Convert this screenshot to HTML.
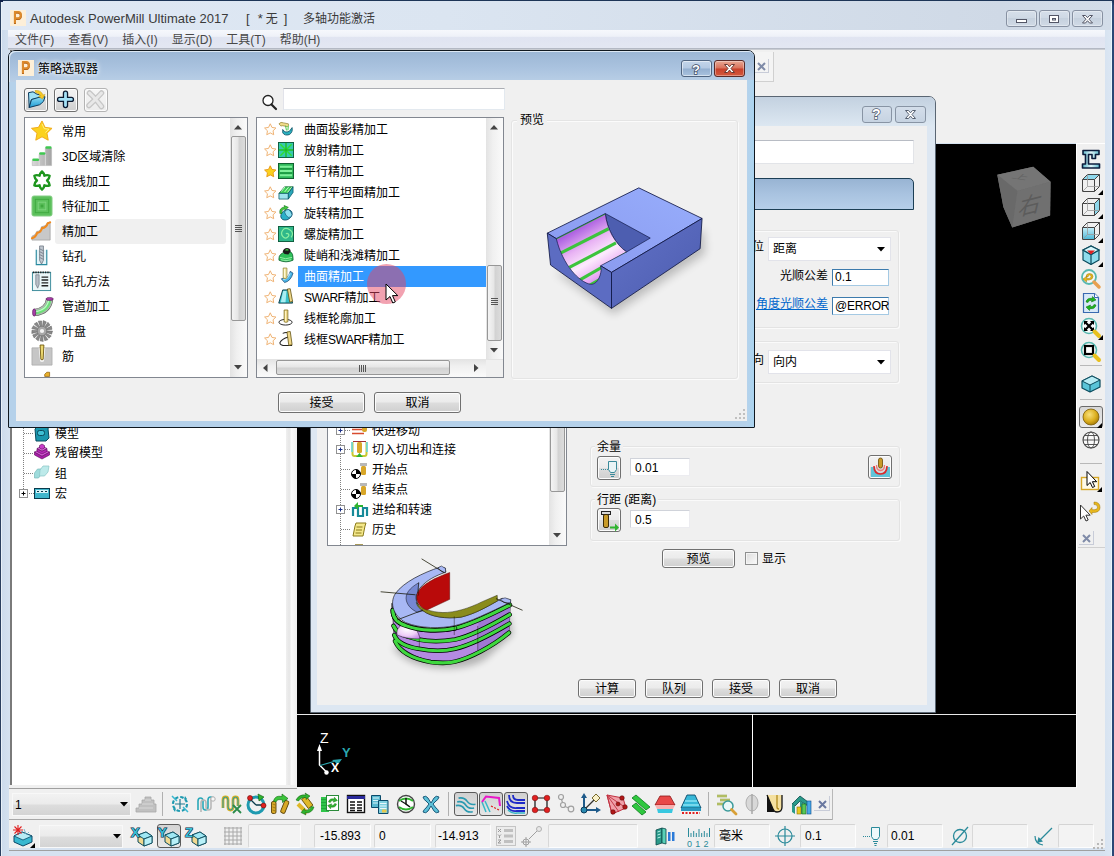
<!DOCTYPE html>
<html lang="zh-CN">
<head>
<meta charset="utf-8">
<title>Autodesk PowerMill Ultimate 2017</title>
<style>
html,body{margin:0;padding:0;}
body{width:1114px;height:856px;overflow:hidden;position:relative;background:#cfdcec;
 font-family:"Liberation Sans","Noto Sans CJK SC",sans-serif;font-size:12px;color:#000;}
.a{position:absolute;box-sizing:border-box;}
.t{position:absolute;white-space:nowrap;line-height:16px;margin-top:1px;}
svg{position:absolute;overflow:visible;}
/* main window */
#frame{left:0;top:0;width:1114px;height:856px;background:linear-gradient(90deg,#cbdaec,#d6e2f0 1%,#d6e2f0 99%,#dde8f4);}
#titlebar{left:2px;top:1px;width:1110px;height:29px;background:linear-gradient(90deg,#dfe8f4,#dbe5f1 40%,#cfd9e6 90%,#d3dde9);}
#menubar{left:8px;top:30px;width:1097px;height:18px;background:linear-gradient(#f6f8fc 0,#eef1f8 35%,#e0e4f1 42%,#e3e7f2 100%);}
.wbtn{border:1px solid #8791a2;border-radius:3px;background:linear-gradient(#d6dfea,#ced8e4 50%,#c6d1de 50%,#d0dae6);box-shadow:inset 0 0 0 1px rgba(255,255,255,.35);}
#explorer{left:10px;top:50px;width:280px;height:736px;background:#fff;}
#gfx{left:297px;top:144px;width:779px;height:644px;background:#000;}
#topgray{left:290px;top:50px;width:815px;height:93px;background:#f0f0f0;}
#rtool{left:1076px;top:143px;width:29px;height:645px;background:#f0f0f0;}
#btool{left:9px;top:788px;width:1096px;height:60px;background:#f0f0f0;}
/* dialogs */
.dlgframe{background:#b9d1ea;border:1px solid #4a5868;border-radius:7px 7px 2px 2px;}
.dlgbody{background:#f0f0f0;}
.btn{padding-top:1px;border:1px solid #707070;border-radius:3px;background:linear-gradient(#f2f2f2,#ebebeb 48%,#dddddd 52%,#cfcfcf);text-align:center;line-height:18px;box-shadow:inset 0 0 0 1px #fcfcfc;}
.inp{background:#fff;border:1px solid #abadb3;}
.grp{border:1px solid #e3e3e3;border-radius:3px;box-shadow:inset 1px 1px 0 #fafafa,1px 1px 0 #fafafa;}
.list{background:#fff;border:1px solid #828790;}
.li{position:absolute;white-space:nowrap;font-size:12px;line-height:16px;margin-top:1px;}
.sbv{background:linear-gradient(90deg,#e3e3e3,#f0f0f0 40%,#fafafa);}
.thumbv{border:1px solid #979797;border-radius:2px;background:linear-gradient(90deg,#f4f4f4,#e6e6e6 45%,#d2d2d2 55%,#dcdcdc);}
.thumbh{border:1px solid #979797;border-radius:2px;background:linear-gradient(#f4f4f4,#e6e6e6 45%,#d2d2d2 55%,#dcdcdc);}
</style>
</head>
<body>
<div class="a" id="frame"></div>
<div class="a" id="titlebar"></div>
<div class="a" id="menubar"></div>
<!-- TITLE -->
<div class="t" style="left:30px;top:10px;font-size:13px;color:#3a3a3a;letter-spacing:.02px;">Autodesk PowerMill Ultimate 2017</div>
<div class="t" style="left:246px;top:10px;font-size:13px;color:#3a3a3a;">[<span style="margin-left:8px">*</span><span style="margin-left:3px;font-size:12px">无</span><span style="margin-left:6px">]</span></div>
<div class="t" style="left:303px;top:10px;font-size:12px;color:#3a3a3a;">多轴功能激活</div>
<!-- MENU -->
<div class="t" id="menu" style="left:15px;top:31px;color:#484848;"><span>文件(F)</span><span style="margin-left:14px">查看(V)</span><span style="margin-left:14px">插入(I)</span><span style="margin-left:14px">显示(D)</span><span style="margin-left:14px">工具(T)</span><span style="margin-left:14px">帮助(H)</span></div>
<!-- MAIN PANELS -->
<div class="a" id="topgray"></div>
<div class="a" id="explorer"></div>
<div class="a" id="gfx"></div>
<div class="a" id="rtool"></div>
<div class="a" id="btool"></div>

<!-- window edge lines -->
<div class="a" style="left:0;top:0;width:1114px;height:1px;background:#1d3557;"></div>
<div class="a" style="left:0;top:0;width:1px;height:856px;background:#2a3f5f;"></div>
<div class="a" style="left:1px;top:1px;width:1px;height:855px;background:#e8f0f8;"></div>
<div class="a" style="left:1112px;top:0;width:2px;height:856px;background:#2b4876;"></div>
<div class="a" style="left:1111px;top:3px;width:1px;height:853px;background:#e9f6fc;"></div>
<div class="a" style="left:1108px;top:0;width:6px;height:5px;background:radial-gradient(circle at 0 100%,transparent 5px,#1c3358 6px);"></div>
<div class="a" style="left:0;top:0;width:3px;height:2px;background:#0f1f4a;"></div>
<!-- app icon -->
<div class="a" style="left:10px;top:10px;width:16px;height:16px;background:#fdefd8;"></div>
<div class="t" style="left:13px;top:8px;font-size:16px;font-weight:bold;color:#dd8a2c;line-height:18px;transform:scaleX(.88);transform-origin:0 0;text-shadow:0 1px 0 #b8681a;">P</div>
<!-- window buttons -->
<div class="a wbtn" style="left:1006px;top:10px;width:31px;height:17px;"></div>
<div class="a wbtn" style="left:1039px;top:10px;width:31px;height:17px;"></div>
<div class="a wbtn" style="left:1072px;top:10px;width:31px;height:17px;"></div>
<svg style="left:1006px;top:10px" width="97" height="17" viewBox="0 0 97 17">
 <rect x="10.5" y="9.5" width="10" height="3" fill="#fff" stroke="#535666" stroke-width="1"/>
 <rect x="43.500" y="5.500" width="9" height="7" fill="#fff" stroke="#535666" stroke-width="1"/>
 <rect x="46.500" y="8.500" width="3" height="1.500" fill="#dfe6f0" stroke="#535666" stroke-width="1"/>
 <path d="M76.500 5.500h3l2 2.200 2-2.200h3l-3.500 3.700 3.500 3.800h-3l-2-2.300-2 2.300h-3l3.500-3.800z" fill="#fff" stroke="#535666" stroke-width="1"/>
</svg>
<!-- menubar lines -->
<div class="a" style="left:8px;top:48px;width:1097px;height:1px;background:#b4b9c4;"></div><div class="a" style="left:8px;top:49px;width:1097px;height:1px;background:#c9ccd2;"></div>
<!-- small x toolbar top -->
<div class="a" style="left:754px;top:52px;width:20px;height:30px;border-right:1px solid #d0d0d0;border-bottom:1px solid #d0d0d0;background:#f4f4f4;"></div>
<div class="a" style="left:755px;top:59px;width:14px;height:14px;border-right:1px solid #c8ccd8;border-bottom:1px solid #c8ccd8;"></div>
<svg style="left:757px;top:62px" width="9" height="9" viewBox="0 0 9 9"><path d="M1 1l7 7M8 1l-7 7" stroke="#7f8ba8" stroke-width="2" fill="none"/></svg>
<!-- explorer borders -->
<div class="a" style="left:10px;top:50px;width:2px;height:735px;background:#7a7a7a;"></div>
<div class="a" style="left:286px;top:50px;width:11px;height:738px;background:linear-gradient(90deg,#f0f0f0,#e6e6e6 30%,#fafafa 50%,#f0f0f0);"></div>
<div class="a" style="left:9px;top:785px;width:288px;height:3px;background:#f0f0f0;"></div>
<div class="a" style="left:9px;top:788px;width:288px;height:1px;background:#a0a0a0;"></div>
<div class="a" style="left:9px;top:819px;width:824px;height:1px;background:#a8a8a8;"></div>
<div class="a" style="left:9px;top:850px;width:1096px;height:1px;background:#a0a0a0;"></div>
<!-- explorer tree -->
<svg style="left:10px;top:420px" width="60" height="90" viewBox="0 0 60 90">
 <path d="M13.500 0v70M14 13.500h10M14 33.500h10M14 53.500h10M19 73.500h5" stroke="#808080" stroke-width="1" stroke-dasharray="1 1" fill="none"/>
 <rect x="9.500" y="69.500" width="8" height="8" fill="#fff" stroke="#919191"/>
 <path d="M11.500 73.500h4M13.500 71.500v4" stroke="#000" stroke-width="1"/>
 <!-- model icon -->
 <path d="M25 9l4-4h10l-1 4 1 9-3 3H26z" fill="#1a96ad" stroke="#0a4a5c" stroke-width="1"/>
 <rect x="27.500" y="10.500" width="7" height="5" rx="2" fill="#3fc0d4" stroke="#0a4a5c"/>
 <!-- residual model -->
 <path d="M24.500 35l7.500 4 7.500-4v-3l-7.500 4-7.500-4z" fill="#a81ea8" stroke="#5a0a5a" stroke-width=".6"/>
 <path d="M24.500 32l7.500-3.500 7.500 3.500-7.500 4z" fill="#e060e0" stroke="#5a0a5a" stroke-width=".6"/>
 <path d="M27 31.500l5 2.500 5-2.500v-3l-5 2.500-5-2.500z" fill="#b428b4" stroke="#5a0a5a" stroke-width=".6"/>
 <path d="M27 28.500l5-2.500 5 2.500-5 2.500z" fill="#e878e8" stroke="#5a0a5a" stroke-width=".6"/>
 <path d="M29.500 28l2.500 1.300 2.500-1.300v-2.500L32 24l-2.500 1.500z" fill="#c83cc8" stroke="#5a0a5a" stroke-width=".6"/>
 <!-- group -->
 <path d="M24.500 53l3-4h5l-1 5-3 4h-4z" fill="#9fdcdc" stroke="#7ababa" stroke-width=".7"/>
 <path d="M30 50l3-4h6l-1 6-3.500 4h-5z" fill="#bdeaea" stroke="#86c4c4" stroke-width=".7"/>
 <!-- macro -->
 <rect x="24.500" y="68.500" width="15" height="10" fill="#3fb6cc" stroke="#0a3a4c"/>
 <rect x="26" y="70" width="12" height="3" fill="#d6f3f8"/>
 <path d="M27 71.500h2M31 71.500h2M35 71.500h2" stroke="#0a3a4c"/>
</svg>
<div class="t" style="left:55px;top:425px;">模型</div>
<div class="t" style="left:55px;top:444px;">残留模型</div>
<div class="t" style="left:55px;top:465px;">组</div>
<div class="t" style="left:55px;top:485px;">宏</div>
<!-- graphics area extras -->
<div class="a" style="left:297px;top:714px;width:779px;height:1px;background:#e8e8e8;"></div>
<div class="a" style="left:752px;top:714px;width:1px;height:74px;background:#fff;"></div>
<div class="a" style="left:297px;top:787px;width:780px;height:1px;background:#f0f0f0;"></div>
<!-- view cube -->
<svg style="left:980px;top:150px" width="90" height="80" viewBox="0 0 963 856">
 <defs><filter id="vb" x="-10%" y="-10%" width="120%" height="120%"><feGaussianBlur stdDeviation="6"/></filter></defs>
 <g filter="url(#vb)">
 <path d="M185 265L570 180L755 340L750 700L345 830L250 610Z" fill="#6e6e6e"/>
 <path d="M185 265L570 180L755 340L400 440Z" fill="#747474"/>
 <path d="M185 265L400 440L345 830L250 610Z" fill="#696969"/>
 <path d="M400 440L755 340L750 700L345 830Z" fill="#6f6f6f"/>
 </g>
</svg>
<div class="t" style="left:1019px;top:193px;font-size:22px;line-height:24px;color:#5c5c5c;transform:skewY(-14deg) skewX(-14deg);">右</div>
<div class="t" style="left:1013px;top:168px;font-size:15px;line-height:16px;color:#646464;transform:rotate(8deg) skewX(-40deg) scaleY(.45);">上</div>
<!-- axes -->
<svg style="left:310px;top:725px" width="50" height="55" viewBox="0 0 50 55">
 <path d="M9.500 22v18l6.500 6.500" stroke="#fff" stroke-width="1.500" fill="none"/>
 <path d="M9.500 19l-2.500 7h5z" fill="#fff"/>
 <circle cx="16.500" cy="47.500" r="2.200" fill="#fff"/>
 <path d="M10 40.500l14-4" stroke="#2aa7b0" stroke-width="1.200"/>
 <path d="M32 34l-10 1 6 4.500z" fill="#2aa7b0"/>
</svg>
<div class="t" style="left:320px;top:729px;font-size:14px;color:#fff;">Z</div>
<div class="t" style="left:342px;top:744px;font-size:13px;color:#2aa7b0;font-weight:bold;">Y</div>
<div class="t" style="left:331px;top:759px;font-size:12px;color:#fff;font-weight:bold;">X</div>

<div class="a" style="left:1076px;top:143px;width:1px;height:645px;background:#fff;"></div>
<div class="a" style="left:1077px;top:143px;width:28px;height:1px;background:#fff;"></div>
<svg style="left:1079px;top:147px" width="24" height="24" viewBox="0 0 24 24"><defs><linearGradient id="mt" x1="0" y1="0" x2="1" y2="0"><stop offset="0" stop-color="#5ab8cc"/><stop offset=".5" stop-color="#e0f4f8"/><stop offset="1" stop-color="#5ab8cc"/></linearGradient></defs><path d="M4 3.500h16v4h-3.500v4H13v-4H9.500v9.500H20.500v4H3.500v-4H6.500V7.500H4z" fill="url(#mt)" stroke="#0c1c3c" stroke-width="1.600" stroke-linejoin="round"/></svg>
<svg style="left:1079px;top:171px" width="24" height="24" viewBox="0 0 24 24"><path d="M3.500 8.500l5-5h12l-5 5z" fill="#8fd8ec"/><path d="M3.500 8.500l5-5h12v12l-5 5h-12z M3.500 8.500h12v12 M15.500 8.500l5-5" fill="none" stroke="#444" stroke-width="1"/><path d="M3.500 20.500l5-5h12M8.500 3.500v12" fill="none" stroke="#9a9a9a" stroke-width=".8"/><path d="M24 19v5h-5z" fill="#000"/></svg>
<svg style="left:1079px;top:195px" width="24" height="24" viewBox="0 0 24 24"><path d="M15.500 8.500l5-5v12l-5 5z" fill="#8fd8ec"/><path d="M3.500 8.500l5-5h12v12l-5 5h-12z M3.500 8.500h12v12 M15.500 8.500l5-5" fill="none" stroke="#444" stroke-width="1"/><path d="M3.500 20.500l5-5h12M8.500 3.500v12" fill="none" stroke="#9a9a9a" stroke-width=".8"/><path d="M24 19v5h-5z" fill="#000"/></svg>
<svg style="left:1079px;top:219px" width="24" height="24" viewBox="0 0 24 24"><defs><linearGradient id="cf" x1="0" y1="0" x2="0" y2="1"><stop offset="0" stop-color="#c8eef8"/><stop offset="1" stop-color="#4ab8d8"/></linearGradient></defs><path d="M3.500 8.500h12v12h-12z" fill="url(#cf)"/><path d="M3.500 8.500l5-5h12v12l-5 5h-12z M3.500 8.500h12v12 M15.500 8.500l5-5" fill="none" stroke="#444" stroke-width="1"/><path d="M3.500 20.500l5-5h12M8.500 3.500v12" fill="none" stroke="#9a9a9a" stroke-width=".8"/><path d="M24 19v5h-5z" fill="#000"/></svg>
<svg style="left:1079px;top:243px" width="24" height="24" viewBox="0 0 24 24"><path d="M4 7l8-4 8 4v10l-8 4.500-8-4.500z" fill="#8fdcec" stroke="#0a4a5c" stroke-width="1.200" stroke-linejoin="round"/><path d="M4 7l8 4.500 8-4.500M12 11.500v10" stroke="#0a4a5c" stroke-width="1.200" fill="none"/><path d="M4 7l8-4 8 4-8 4.500z" fill="#d8f6fa" stroke="#0a4a5c" stroke-width="1.200"/><path d="M8 7.500l4 4 4-4z" fill="#e02020"/><path d="M24 19v5h-5z" fill="#000"/></svg>
<svg style="left:1079px;top:267px" width="24" height="24" viewBox="0 0 24 24"><circle cx="10" cy="10" r="7" fill="#f4f8f8" stroke="#58b8b0" stroke-width="1.800"/><path d="M7 10q0-3.500 3.500-3.500T14 9.500 10 13H7.500v2L4 12l3.500-2.500v2H10q2-.2 2-2T10.500 8 9 10z" fill="#e8b81e" stroke="#a07808" stroke-width=".5"/><path d="M15 15l5 5" stroke="#e8a050" stroke-width="3.500" stroke-linecap="round"/></svg>
<svg style="left:1079px;top:291px" width="24" height="24" viewBox="0 0 24 24"><path d="M4.500 2.500h11l4 4v15h-15z" fill="#d8e8f8" stroke="#3a6ab0" stroke-width="1.200"/><path d="M15.500 2.500v4h4" fill="#fff" stroke="#3a6ab0"/><path d="M7 11q1-4.500 6-3.500l.5-2 3.500 3.500-4.500 2 .4-1.800Q9.500 9 9 11.500z" fill="#1eb41e" stroke="#0a6a0a" stroke-width=".5"/><path d="M17 14q-1 4.500-6 3.500l-.5 2L7 16l4.500-2-.4 1.800q3.400.2 3.900-2.300z" fill="#1eb41e" stroke="#0a6a0a" stroke-width=".5"/></svg>
<svg style="left:1079px;top:316px" width="24" height="24" viewBox="0 0 24 24"><circle cx="10" cy="10" r="7.500" fill="#f8fcfc" stroke="#58b8b0" stroke-width="1.600"/><path d="M5 5h4l-1.200 1.200 2.200 2.300 2.200-2.300L11 5h4v4l-1.200-1.200-2.300 2.200 2.300 2.200L15 11v4h-4l1.200-1.200-2.200-2.300-2.200 2.300L9 15H5v-4l1.200 1.200 2.300-2.200-2.300-2.200L5 9z" fill="#000"/><path d="M15.500 15.500l4.500 4.500" stroke="#e8c01e" stroke-width="4" stroke-linecap="round"/><path d="M24 19v5h-5z" fill="#000"/></svg>
<svg style="left:1079px;top:340px" width="24" height="24" viewBox="0 0 24 24"><circle cx="10" cy="10" r="7.500" fill="#f8fcfc" stroke="#58b8b0" stroke-width="1.600"/><rect x="6" y="6" width="8" height="8" fill="#fff" stroke="#000" stroke-width="2.200"/><path d="M15.500 15.500l4.500 4.500" stroke="#e8c01e" stroke-width="4" stroke-linecap="round"/></svg>
<div class="a" style="left:1080px;top:365px;width:22px;height:1px;background:#b8b8b8;"></div>
<svg style="left:1079px;top:372px" width="24" height="24" viewBox="0 0 24 24"><path d="M3 9l10-5 8 4v7l-10 5-8-4z" fill="#5ac4d8" stroke="#0a4a5c" stroke-width="1.200" stroke-linejoin="round"/><path d="M3 9l8 4 10-5-8-4z" fill="#b8ecf4" stroke="#0a4a5c" stroke-width="1"/><path d="M11 13v7" stroke="#0a4a5c"/></svg>
<div class="a" style="left:1080px;top:399px;width:22px;height:1px;background:#b8b8b8;"></div>
<div class="a" style="left:1079px;top:406px;width:24px;height:22px;border:1px solid #6a6a6a;border-radius:3px;background:linear-gradient(#d8d8d8,#eaeaea);"></div>
<svg style="left:1079px;top:405px" width="24" height="24" viewBox="0 0 24 24"><defs><radialGradient id="sg" cx=".4" cy=".35" r=".7"><stop offset="0" stop-color="#f8e07a"/><stop offset=".6" stop-color="#dcae1e"/><stop offset="1" stop-color="#a07808"/></radialGradient></defs><circle cx="12" cy="12" r="8" fill="url(#sg)" stroke="#7a5a08" stroke-width=".8"/><path d="M23 18v5h-5z" fill="#000"/></svg>
<svg style="left:1079px;top:428px" width="24" height="24" viewBox="0 0 24 24"><circle cx="12" cy="12" r="8" fill="#fafafa" stroke="#444" stroke-width="1.100"/><ellipse cx="12" cy="12" rx="3.500" ry="8" fill="none" stroke="#444" stroke-width=".9"/><path d="M4 12h16M5.500 7.500h13M5.500 16.500h13" stroke="#444" stroke-width=".9"/></svg>
<div class="a" style="left:1080px;top:463px;width:22px;height:1px;background:#b8b8b8;"></div>
<svg style="left:1079px;top:470px" width="24" height="24" viewBox="0 0 24 24"><rect x="2.500" y="7.500" width="17" height="12" fill="#fffbe8" stroke="#d8a828" stroke-width="1.400"/><path d="M8 1.500v14l3.200-3 2.300 5 2.200-1-2.300-4.800h4.300z" fill="#fff" stroke="#000" stroke-width="1" stroke-linejoin="round"/><path d="M23 17v5h-5z" fill="#000"/></svg>
<svg style="left:1079px;top:500px" width="24" height="24" viewBox="0 0 24 24"><path d="M1.500 5v14l3.200-3 2.300 5 2.200-1-2.300-4.800h4.300z" fill="#fff" stroke="#333" stroke-width="1" stroke-linejoin="round"/><path d="M10 11l3-3.500v2.200q5.500.5 5.500-2.500T15 4.500V2q6 0 6 5.500T13 12.500v2z" fill="#e8b81e" stroke="#9a7208" stroke-width=".5"/></svg>
<div class="a" style="left:1079px;top:531px;width:15px;height:14px;border-right:1px solid #c8ccd8;border-bottom:1px solid #c8ccd8;"></div>
<svg style="left:1082px;top:534px" width="9" height="9" viewBox="0 0 9 9"><path d="M1 1l7 7M8 1l-7 7" stroke="#7f8ba8" stroke-width="2" fill="none"/></svg>
<div class="a" style="left:1078px;top:547px;width:27px;height:1px;background:#d0d0d0;"></div>
<div class="a" style="left:12px;top:793px;width:119px;height:23px;border:1px solid #f8f8f8;background:linear-gradient(#f2f2f2,#ebebeb 48%,#dddddd 52%,#d4d4d4);"></div>
<div class="t" style="left:15px;top:796px;">1</div>
<svg style="left:120px;top:802px" width="9" height="5"><path d="M0 0h8L4 4.500z" fill="#000"/></svg>
<svg style="left:134px;top:792px" width="24" height="24" viewBox="0 0 24 24"><path d="M2 20v-4h3v-4h3V8h3V5h6v3h3v4h2v8z" fill="#c0c0c0" stroke="#a8a8a8" stroke-width=".8"/><path d="M5 16h14M8 12h11M11 8h6" stroke="#d8d8d8"/></svg>
<div class="a" style="left:162px;top:792px;width:1px;height:24px;background:#b0b0b0;"></div>
<svg style="left:168px;top:792px" width="24" height="24" viewBox="0 0 24 24"><circle cx="12" cy="12" r="7" fill="none" stroke="#1e9ab0" stroke-width="2.200" stroke-dasharray="3.500 2"/><path d="M12 7v10M7 12h10" stroke="#1e7a90" stroke-width="1.200"/><path d="M15 15l5 5M9 9L4 4" stroke="#3ab8d0" stroke-width="1.500"/><path d="M17 4l2 3-3 .5zM7 20l-2-3 3-.5z" fill="#1e9ab0"/></svg>
<svg style="left:194px;top:792px" width="24" height="24" viewBox="0 0 24 24"><path d="M4 18V9q0-3 2.500-3T9 9v6q0 3 2.500 3t2.500-3V8q0-3 2.500-3T19 8" fill="none" stroke="#2aa8b8" stroke-width="1.600"/><path d="M7 20V11q0-3 2.500-3T12 11v4q0 3 2.500 3t2.500-3V8q0-3 2.500-3" fill="none" stroke="#b8b8b8" stroke-width="1.600"/><circle cx="19" cy="7" r="2.200" fill="#f8f8f8" stroke="#b0b0b0"/></svg>
<svg style="left:220px;top:792px" width="24" height="24" viewBox="0 0 24 24"><path d="M3 16V8q0-3 2.500-3T8 8v7q0 3 2.500 3t2.500-3V8q0-3 2.500-3T18 8v6" fill="none" stroke="#d8b01e" stroke-width="2.800"/><path d="M3 16V8q0-3 2.500-3T8 8v7q0 3 2.500 3t2.500-3V8q0-3 2.500-3T18 8v6" fill="none" stroke="#1e9ab0" stroke-width="1"/><path d="M13 13l8 8M21 13l-8 8" stroke="#2a8a4a" stroke-width="1.800"/></svg>
<svg style="left:244px;top:792px" width="24" height="24" viewBox="0 0 24 24"><circle cx="12" cy="13" r="8" fill="none" stroke="#1e9ab0" stroke-width="3"/><path d="M12 13L6 7M12 13h7" stroke="#0a3a4a" stroke-width="1.300"/><path d="M14 2l6 3-5 4z" fill="#2fb42f" stroke="#0a5a0a" stroke-width=".6"/><circle cx="6" cy="6" r="2.500" fill="#e02020" stroke="#6a0808" stroke-width=".6"/><circle cx="19.500" cy="13.500" r="2.500" fill="#e02020" stroke="#6a0808" stroke-width=".6"/></svg>
<svg style="left:268px;top:792px" width="24" height="24" viewBox="0 0 24 24"><rect x="3.500" y="9.500" width="4.500" height="12" rx="1.500" fill="#d8a828" stroke="#5a4208" stroke-width=".9"/><path d="M4.500 12l3 1M4.500 15l3 1M4.500 18l3 1" stroke="#8a6a10" stroke-width=".7"/><rect x="14.500" y="8.500" width="4.500" height="13" rx="1.500" fill="#d8a828" stroke="#5a4208" stroke-width=".9" transform="rotate(22 17 15)"/><path d="M5.500 9Q7 3 14 4.500V2l6 4.500-5.500 4V8Q9 6.500 8 10z" fill="#3cc43c" stroke="#0a6a0a" stroke-width=".6"/></svg>
<svg style="left:293px;top:792px" width="24" height="24" viewBox="0 0 24 24"><path d="M8 8l4-4 8 8-4 4z" fill="#e0b828" stroke="#6a5208" stroke-width=".9" transform="rotate(8 12 12)"/><path d="M5 12l9 9" stroke="#e0b828" stroke-width="4"/><path d="M3 8q3-6 10-5l-1-2 5 3-4 3.500v-2Q8 5 5.500 9z" fill="#2fb42f" stroke="#0a5a0a" stroke-width=".5"/><path d="M21 15q-2 6.500-9 6l1 2-5-2.500 3.500-4 .3 2q5 0 6.500-4z" fill="#2fb42f" stroke="#0a5a0a" stroke-width=".5"/></svg>
<svg style="left:318px;top:792px" width="24" height="24" viewBox="0 0 24 24"><path d="M3 5h8v15H3z" fill="#2fc44a"/><path d="M3 7.500h8M3 10.500h8M3 13.500h8M3 16.500h8" stroke="#1ea838" stroke-width="1"/><rect x="8.500" y="3.500" width="12" height="15" fill="#fff" stroke="#2a8a3a" stroke-width="1"/><path d="M10.500 10q1-4 5.500-3l.4-1.800 3 3.300-4 1.700.3-1.600q-2.800-.3-3.400 1.900z" fill="#2fb42f" stroke="#0a6a0a" stroke-width=".4"/><path d="M18.500 12q-1 4-5.500 3l-.4 1.800-3-3.300 4-1.700-.3 1.600q2.800.3 3.400-1.900z" fill="#2fb42f" stroke="#0a6a0a" stroke-width=".4"/></svg>
<svg style="left:344px;top:792px" width="24" height="24" viewBox="0 0 24 24"><rect x="3.500" y="3.500" width="17" height="17" fill="#fff" stroke="#111" stroke-width="1.400"/><path d="M3 5.500h18" stroke="#2a2a9a" stroke-width="3"/><path d="M6 10h5M13 10h5M6 13h5M13 13h5M6 16h5M13 16h5M6 18.500h5M13 18.500h5" stroke="#111" stroke-width="1.300"/></svg>
<svg style="left:368px;top:792px" width="24" height="24" viewBox="0 0 24 24"><path d="M3.500 3.500h9v12h-9z" fill="#58b8d0" stroke="#0a4a6a" stroke-width="1"/><path d="M5 6h6M5 8.500h6M5 11h6" stroke="#d8f4fa"/><path d="M10.500 8.500h9.500v13h-9.500z" fill="#7fd0e0" stroke="#0a4a6a" stroke-width="1"/><path d="M12 11.500h6.500M12 14h6.500M12 16.500h6.500" stroke="#e8f8fc"/><rect x="14" y="17.500" width="4.500" height="3" fill="#e8c84a"/></svg>
<svg style="left:394px;top:792px" width="24" height="24" viewBox="0 0 24 24"><circle cx="12" cy="12" r="8.500" fill="#fff" stroke="#444" stroke-width="1.400"/><path d="M5 9q7-5 14 0M5 15q7 5 14 0" fill="none" stroke="#2fb42f" stroke-width="1.800"/><path d="M12 6v6l4 3" stroke="#111" stroke-width="1.500" fill="none"/><path d="M12 12L7 9" stroke="#111" stroke-width="1.200"/></svg>
<svg style="left:419px;top:792px" width="24" height="24" viewBox="0 0 24 24"><path d="M4 5q3-2 5 1l3 5 3-5q2-3 5-1-1 3-3 4l-3 3 3 4q2 1 3 4-3 2-5-1l-3-5-3 5q-2 3-5 1 1-3 3-4l3-4-3-3Q5 8 4 5z" fill="#5cc0d8" stroke="#1a5a7a" stroke-width="1" stroke-linejoin="round"/></svg>
<div class="a" style="left:448px;top:792px;width:1px;height:24px;background:#b0b0b0;"></div>
<div class="a" style="left:454px;top:792px;width:24px;height:24px;border:1px solid #5a5a5a;border-radius:3px;background:linear-gradient(#d0d0d0,#e6e6e6);"></div>
<div class="a" style="left:479px;top:792px;width:24px;height:24px;border:1px solid #5a5a5a;border-radius:3px;background:linear-gradient(#d0d0d0,#e6e6e6);"></div>
<div class="a" style="left:504px;top:792px;width:24px;height:24px;border:1px solid #5a5a5a;border-radius:3px;background:linear-gradient(#d0d0d0,#e6e6e6);"></div>
<svg style="left:454px;top:792px" width="24" height="24" viewBox="0 0 24 24"><path d="M3 9q5-3 9 0t9 0M3 13q5-3 9 0t9 0M3 17q5-3 9 0t9 0" fill="none" stroke="#2a9ab0" stroke-width="1.600" transform="rotate(20 12 12)"/></svg>
<svg style="left:479px;top:792px" width="24" height="24" viewBox="0 0 24 24"><path d="M3 10l4 10M6 9l5 11" stroke="#38b8c8" stroke-width="1.500"/><path d="M3 10L7 4.500 20 6l1 8" fill="none" stroke="#e818c8" stroke-width="2"/><path d="M12 14l8 4" stroke="#e02020" stroke-width="1.200" stroke-dasharray="2 1.500"/></svg>
<svg style="left:504px;top:792px" width="24" height="24" viewBox="0 0 24 24"><path d="M5 3q0 8 8 8h8M9 3q0 5 5 5h7M3 9q2 8 10 7h8M3 14q3 6 10 5h8" fill="none" stroke="#1e2ac8" stroke-width="1.800"/><path d="M4 18q4 4 9 3h8" fill="none" stroke="#38b8c8" stroke-width="1.500"/></svg>
<svg style="left:529px;top:792px" width="24" height="24" viewBox="0 0 24 24"><path d="M6 6h12v12H6z" fill="none" stroke="#111" stroke-width="1.200"/><g fill="#e02020" stroke="#6a0808" stroke-width=".5"><circle cx="6" cy="6" r="2.800"/><circle cx="18" cy="6" r="2.800"/><circle cx="6" cy="18" r="2.800"/><circle cx="18" cy="18" r="2.800"/></g></svg>
<svg style="left:554px;top:792px" width="24" height="24" viewBox="0 0 24 24"><g fill="none" stroke="#a0a0a0" stroke-width="1.200"><circle cx="7" cy="5" r="2.500"/><circle cx="9" cy="13" r="2.500"/><circle cx="17" cy="17" r="2.800"/><path d="M7.500 7.500l1 3M11 14.500l4 1.500"/></g></svg>
<svg style="left:578px;top:792px" width="24" height="24" viewBox="0 0 24 24"><path d="M6 3v15h15" fill="none" stroke="#1e5a8a" stroke-width="2"/><path d="M6 1l-3 5h6zM23 18l-5-3v6z" fill="#1e5a8a"/><circle cx="6" cy="18" r="3" fill="#2a8ab0" stroke="#0a3a5a"/><path d="M8 16l8-8" stroke="#333" stroke-width="1.200"/><path d="M14 6l4-4 4 4-4 4z" fill="#f8f0c8" stroke="#6a5a1a" stroke-width=".9"/></svg>
<svg style="left:604px;top:792px" width="24" height="24" viewBox="0 0 24 24"><path d="M3 3l16 3 3 10-14 6z" fill="#f0a0a8" stroke="#c03040" stroke-width="1"/><path d="M3 3l5 19M3 3l12 17M3 3l19 13" stroke="#c03040" stroke-width=".9"/><g fill="#b01818" stroke="#500" stroke-width=".5"><circle cx="18" cy="6" r="2.300"/><circle cx="21" cy="15" r="2.300"/><circle cx="9" cy="20" r="2.300"/><circle cx="14" cy="12" r="2"/></g></svg>
<svg style="left:629px;top:792px" width="24" height="24" viewBox="0 0 24 24"><path d="M3 6l4-3 14 12-4 3zM3 14l4-3 10 9-4 3z" fill="#2fc83f" stroke="#0a7a1a" stroke-width=".8"/></svg>
<svg style="left:653px;top:792px" width="24" height="24" viewBox="0 0 24 24"><path d="M7 4h10l5 9H2z" fill="#e84848" stroke="#8a1818" stroke-width=".8"/><path d="M2 13h20l-2 4H4z" fill="#f8b0b0"/><path d="M4 17h16l-1 4H5z" fill="#38c8e0"/></svg>
<svg style="left:679px;top:792px" width="24" height="24" viewBox="0 0 24 24"><path d="M8 3h8l6 13H2z" fill="#38b8d8" stroke="#0a4a6a" stroke-width=".9"/><path d="M6 9h12M4 13h16" stroke="#8ae4f4" stroke-width="1.500"/><path d="M2 16h20v3H2z" fill="#2a98c0"/><path d="M3 21h18" stroke="#e02020" stroke-width="2" stroke-dasharray="2 1.500"/></svg>
<div class="a" style="left:708px;top:792px;width:1px;height:24px;background:#b0b0b0;"></div>
<svg style="left:714px;top:792px" width="24" height="24" viewBox="0 0 24 24"><path d="M3 4h10M6 8h10M3 12h7" stroke="#8a9a3a" stroke-width="2.500"/><path d="M3 4h10M6 8h10M3 12h7" stroke="#d8e08a" stroke-width="1"/><circle cx="14" cy="14" r="5" fill="#eaf8f8" stroke="#3a9a9a" stroke-width="1.500"/><path d="M17.500 17.500l4.500 4.500" stroke="#d8a038" stroke-width="2.800" stroke-linecap="round"/></svg>
<svg style="left:740px;top:792px" width="24" height="24" viewBox="0 0 24 24"><ellipse cx="12" cy="11" rx="6" ry="8" fill="#d8d8d8" stroke="#b0b0b0"/><path d="M12 2v20" stroke="#a8a8a8" stroke-width="1.500"/></svg>
<svg style="left:764px;top:792px" width="24" height="24" viewBox="0 0 24 24"><path d="M3 3l6 14q1 3 4 3 5 0 5-5V3" fill="#f4e0a0" stroke="#111" stroke-width="1.300"/><path d="M3 3l6 14 1.500 3H3z" fill="#111"/><path d="M13 3v12q0 2 2 2" stroke="#b08a1e" stroke-width="1.300" fill="none"/></svg>
<svg style="left:789px;top:792px" width="24" height="24" viewBox="0 0 24 24"><path d="M3 12l8-8 8 6v4l-8-5-5 5z" fill="#2a9a8a" stroke="#0a4a4a" stroke-width=".8"/><path d="M3 12l3 2v8l-3-2zM11 9l3 2v11h-3z" fill="#2a9a8a"/><rect x="8" y="15" width="4" height="7" fill="#e8c81e" stroke="#8a7208" stroke-width=".6"/><rect x="13" y="12" width="4" height="10" fill="#58c858" stroke="#1a6a1a" stroke-width=".6"/><rect x="18" y="9" width="4" height="13" fill="#48a8e8" stroke="#0a4a8a" stroke-width=".6"/></svg>
<div class="a" style="left:814px;top:796px;width:16px;height:15px;border-right:1px solid #c8ccd8;border-bottom:1px solid #c8ccd8;"></div>
<svg style="left:818px;top:800px" width="9" height="9" viewBox="0 0 9 9"><path d="M1 1l7 7M8 1l-7 7" stroke="#6a78a0" stroke-width="2" fill="none"/></svg>
<div class="a" style="left:832px;top:789px;width:1px;height:31px;background:#b8b8b8;"></div>
<div class="a" style="left:833px;top:789px;width:272px;height:30px;background:#f0f0f0;"></div>
<svg style="left:11px;top:824px" width="24" height="24" viewBox="0 0 24 24"><path d="M3 12l8-4 10 4v6l-9 4-9-4z" fill="#38b8d0" stroke="#0a4a6a" stroke-width="1"/><path d="M3 12l9 4 9-4-10-4z" fill="#b8ecf4" stroke="#0a4a6a" stroke-width=".8"/><path d="M7 1v10M2 6h10M3.500 2.500l7 7M10.500 2.500l-7 7" stroke="#e02020" stroke-width="1.100"/><path d="M13 5l2 5M18 8l-3 3" stroke="#7ab8c8" stroke-width="1"/><path d="M24 19v5h-5z" fill="#000"/></svg>
<div class="a" style="left:39px;top:825px;width:84px;height:23px;border:1px solid #f8f8f8;background:linear-gradient(#f2f2f2,#ebebeb 48%,#dddddd 52%,#d4d4d4);"></div>
<svg style="left:113px;top:834px" width="9" height="5"><path d="M0 0h8L4 4.500z" fill="#000"/></svg>
<svg style="left:130px;top:824px" width="24" height="24" viewBox="0 0 24 24"><path d="M8 11l8-3 6 4v7l-8 3-6-4z" fill="#f0d890" stroke="#0a4a5c" stroke-width="1"/><path d="M8 11l6 4 8-3-6-4z" fill="#9fe8f4" stroke="#0a4a5c" stroke-width=".9"/><path d="M14 15v7" stroke="#0a4a5c"/><path d="M14 15l8-3v7l-8 3z" fill="#b8f0f8" stroke="#0a4a5c" stroke-width=".9"/></svg>
<div class="t" style="left:131px;top:825px;font-size:13px;font-weight:bold;color:#38c0d8;-webkit-text-stroke:1.200px #0c1c3c;paint-order:stroke fill;line-height:14px;">X</div>
<div class="a" style="left:157px;top:824px;width:24px;height:24px;border:1px solid #5a5a5a;border-radius:3px;background:linear-gradient(#d4d4d4,#e8e8e8);"></div>
<svg style="left:157px;top:824px" width="24" height="24" viewBox="0 0 24 24"><path d="M8 11l8-3 6 4v7l-8 3-6-4z" fill="#f0d890" stroke="#0a4a5c" stroke-width="1"/><path d="M8 11l6 4 8-3-6-4z" fill="#9fe8f4" stroke="#0a4a5c" stroke-width=".9"/><path d="M14 15v7" stroke="#0a4a5c"/><path d="M14 15l8-3v7l-8 3z" fill="#b8f0f8" stroke="#0a4a5c" stroke-width=".9"/></svg>
<div class="t" style="left:158px;top:825px;font-size:13px;font-weight:bold;color:#38c0d8;-webkit-text-stroke:1.200px #0c1c3c;paint-order:stroke fill;line-height:14px;">Y</div>
<svg style="left:184px;top:824px" width="24" height="24" viewBox="0 0 24 24"><path d="M8 11l8-3 6 4v7l-8 3-6-4z" fill="#f0d890" stroke="#0a4a5c" stroke-width="1"/><path d="M8 11l6 4 8-3-6-4z" fill="#9fe8f4" stroke="#0a4a5c" stroke-width=".9"/><path d="M14 15v7" stroke="#0a4a5c"/><path d="M14 15l8-3v7l-8 3z" fill="#b8f0f8" stroke="#0a4a5c" stroke-width=".9"/></svg>
<div class="t" style="left:185px;top:825px;font-size:13px;font-weight:bold;color:#38c0d8;-webkit-text-stroke:1.200px #0c1c3c;paint-order:stroke fill;line-height:14px;">Z</div>
<svg style="left:221px;top:824px" width="24" height="24" viewBox="0 0 24 24"><path d="M4 3v18M8 3v18M12 3v18M16 3v18M20 3v18M3 4h18M3 8h18M3 12h18M3 16h18M3 20h18" stroke="#a8a8a8" stroke-width="1"/></svg>
<div class="a" style="left:248px;top:824px;width:53px;height:24px;border:1px solid;border-color:#d4d4d4 #fdfdfd #fdfdfd #d8d8d8;border-radius:2px;background:#f3f3f3;"></div>
<div class="a" style="left:314px;top:824px;width:57px;height:24px;border:1px solid;border-color:#d4d4d4 #fdfdfd #fdfdfd #d8d8d8;border-radius:2px;background:#f3f3f3;"></div>
<div class="t" style="left:320px;top:827px;">-15.893</div>
<div class="a" style="left:374px;top:824px;width:57px;height:24px;border:1px solid;border-color:#d4d4d4 #fdfdfd #fdfdfd #d8d8d8;border-radius:2px;background:#f3f3f3;"></div>
<div class="t" style="left:379px;top:827px;">0</div>
<div class="a" style="left:435px;top:824px;width:56px;height:24px;border:1px solid;border-color:#d4d4d4 #fdfdfd #fdfdfd #d8d8d8;border-radius:2px;background:#f3f3f3;"></div>
<div class="t" style="left:438px;top:827px;">-14.913</div>
<svg style="left:494px;top:824px" width="24" height="24" viewBox="0 0 24 24"><rect x="2.500" y="2.500" width="19" height="19" fill="#ececec" stroke="#c4c4c4"/><path d="M10 6.500h9M10 12h9M10 17.500h9" stroke="#c0c0c0" stroke-width="3"/><path d="M4 5l3 3M7 5L4 8M4 10.500l1.500 1.500L7 10.500M5.500 12v2M4 16h3l-3 3h3" stroke="#9a9a9a" stroke-width="1" fill="none"/></svg>
<svg style="left:520px;top:824px" width="24" height="24" viewBox="0 0 24 24"><circle cx="6" cy="18" r="3" fill="none" stroke="#a0a0a0"/><path d="M6 13v10M1 18h10M9 15l8-8" stroke="#a0a0a0" stroke-width="1"/><circle cx="19" cy="5" r="2.500" fill="#e8e8e8" stroke="#b0b0b0"/></svg>
<div class="a" style="left:548px;top:824px;width:90px;height:24px;border:1px solid;border-color:#d4d4d4 #fdfdfd #fdfdfd #d8d8d8;border-radius:2px;background:#f3f3f3;"></div>
<svg style="left:652px;top:824px" width="24" height="24" viewBox="0 0 24 24"><path d="M4 6l6-2v15l-6 2z" fill="#2a9a8a" stroke="#0a4a4a" stroke-width=".8"/><path d="M10 4l4 1v15l-4-1z" fill="#58d0b8" stroke="#0a4a4a" stroke-width=".8"/><path d="M5.500 8l3-1M5.500 11l3-1M5.500 14l3-1" stroke="#b8f0e8"/><rect x="16" y="8" width="2.500" height="9" fill="#2a7ad8"/><rect x="20" y="8" width="2.500" height="9" fill="#2a7ad8"/></svg>
<svg style="left:687px;top:826px" width="24" height="22" viewBox="0 0 24 22"><path d="M1.500 2v9M22.500 2v9M12 3v8M6.700 5v6M17.300 5v6M4 7v4M9.300 7v4M14.700 7v4M20 7v4" stroke="#2a8a9a" stroke-width="1"/></svg>
<div class="t" style="left:687px;top:838px;font-size:9px;line-height:10px;color:#2a8a9a;letter-spacing:3.200px;">012</div>
<div class="a" style="left:714px;top:824px;width:56px;height:24px;border:1px solid;border-color:#d4d4d4 #fdfdfd #fdfdfd #d8d8d8;border-radius:2px;background:#f3f3f3;"></div>
<div class="t" style="left:719px;top:827px;">毫米</div>
<svg style="left:773px;top:824px" width="24" height="24" viewBox="0 0 24 24"><circle cx="12" cy="12" r="7" fill="none" stroke="#2a8a9a" stroke-width="1.200"/><path d="M12 2v20M2 12h20" stroke="#2a8a9a" stroke-width="1.200"/></svg>
<div class="a" style="left:800px;top:824px;width:56px;height:24px;border:1px solid;border-color:#d4d4d4 #fdfdfd #fdfdfd #d8d8d8;border-radius:2px;background:#f3f3f3;"></div>
<div class="t" style="left:805px;top:827px;">0.1</div>
<svg style="left:861px;top:824px" width="24" height="24" viewBox="0 0 24 24"><path d="M10.500 3.500h8v9l-2 3h-4l-2-3z" fill="#eef8fa" stroke="#2a8a9a"/><path d="M12 17.500h5M13 19.500h3M13.500 21.500h2" stroke="#2a8a9a"/><path d="M2 12.500h8" stroke="#2a8a9a" stroke-dasharray="1 1"/></svg>
<div class="a" style="left:887px;top:824px;width:56px;height:24px;border:1px solid;border-color:#d4d4d4 #fdfdfd #fdfdfd #d8d8d8;border-radius:2px;background:#f3f3f3;"></div>
<div class="t" style="left:891px;top:827px;">0.01</div>
<svg style="left:948px;top:824px" width="24" height="24" viewBox="0 0 24 24"><circle cx="12" cy="12" r="6.500" fill="none" stroke="#2a8a9a" stroke-width="1.300"/><path d="M4 21L20 3" stroke="#2a8a9a" stroke-width="1.300"/></svg>
<div class="a" style="left:972px;top:824px;width:56px;height:24px;border:1px solid;border-color:#d4d4d4 #fdfdfd #fdfdfd #d8d8d8;border-radius:2px;background:#f3f3f3;"></div>
<svg style="left:1032px;top:824px" width="24" height="24" viewBox="0 0 24 24"><path d="M20 4L6 18" stroke="#2a8a9a" stroke-width="1.300"/><path d="M5 19l1.500-6 4.500 4.500z" fill="#2a8a9a"/><path d="M3 12q0 8 8 9" fill="none" stroke="#2a8a9a" stroke-width="1.200"/></svg>
<div class="a" style="left:1058px;top:824px;width:36px;height:24px;border:1px solid;border-color:#d4d4d4 #fdfdfd #fdfdfd #d8d8d8;border-radius:2px;background:#f3f3f3;"></div>
<svg style="left:1092px;top:837px" width="12" height="12"><path d="M9 2h2v2h-2zM9 6h2v2h-2zM9 10h2v2h-2zM5 6h2v2h-2zM5 10h2v2h-2zM1 10h2v2h-2z" fill="#b8b8b8"/></svg>

<!-- ===== dialog 2 (toolpath form, inactive) ===== -->
<div class="a" style="left:310px;top:96px;width:626px;height:617px;background:#dde7f2;border:1px solid #5a6673;border-radius:7px 7px 1px 1px;"></div>
<div class="a" style="left:311px;top:97px;width:624px;height:30px;border-radius:6px 6px 0 0;background:linear-gradient(#c3d1e0,#d3dfeb 60%,#dde8f2);"></div>
<div class="a dlgbody" style="left:317px;top:126px;width:610px;height:579px;"></div>
<!-- title buttons -->
<div class="a" style="left:862px;top:106px;width:30px;height:17px;border:1px solid #8894a4;border-radius:3px;background:linear-gradient(#d4deea,#c6d3e2);"></div>
<div class="a" style="left:895px;top:106px;width:31px;height:17px;border:1px solid #8894a4;border-radius:3px;background:linear-gradient(#d4deea,#c6d3e2);"></div>
<div class="t" style="left:872px;top:106px;font-size:14px;font-weight:bold;color:#fff;-webkit-text-stroke:1.500px #566070;paint-order:stroke fill;line-height:15px;">?</div>
<svg style="left:895px;top:106px" width="31" height="17" viewBox="0 0 31 17"><path d="M10.500 4.500h3l2 2.300 2-2.300h3l-3.500 4 3.500 4h-3l-2-2.400-2 2.400h-3l3.500-4z" fill="#fff" stroke="#566070" stroke-width="1"/></svg>
<!-- name input -->
<div class="a inp" style="left:600px;top:140px;width:314px;height:24px;border-color:#b8bcc4 #e2e4e8 #e2e4e8 #b8bcc4;"></div>
<!-- blue tab header -->
<div class="a" style="left:600px;top:178px;width:314px;height:32px;border:1px solid #1c3f55;border-radius:0 5px 0 0;background:linear-gradient(#98b4d3,#a9c3e0 50%,#b6cfe9);"></div>
<!-- group 1 -->
<div class="a grp" style="left:590px;top:230px;width:309px;height:98px;"></div>
<div class="t" style="left:752px;top:238px;">位</div>
<div class="a inp" style="left:768px;top:237px;width:123px;height:24px;border-color:#e2e3ea;"></div>
<div class="t" style="left:773px;top:240px;">距离</div>
<svg style="left:877px;top:247px" width="9" height="5"><path d="M0 0h8L4 4.500z" fill="#000"/></svg>
<div class="t" style="left:780px;top:267px;">光顺公差</div>
<div class="a inp" style="left:832px;top:269px;width:57px;height:17px;border-color:#3d7bad #a4c9e3 #a4c9e3 #3d7bad;"></div>
<div class="t" style="left:835px;top:268px;">0.1</div>
<div class="t" style="left:756px;top:295px;color:#0066cc;text-decoration:underline;">角度光顺公差</div>
<div class="a inp" style="left:832px;top:297px;width:57px;height:18px;border-color:#3d7bad #a4c9e3 #a4c9e3 #3d7bad;"></div>
<div class="t" style="left:835px;top:297px;letter-spacing:-.2px;">@ERROR</div>
<!-- group 2 -->
<div class="a grp" style="left:590px;top:341px;width:309px;height:42px;"></div>
<div class="t" style="left:752px;top:351px;">向</div>
<div class="a inp" style="left:768px;top:350px;width:123px;height:24px;border-color:#e2e3ea;"></div>
<div class="t" style="left:773px;top:353px;">向内</div>
<svg style="left:877px;top:360px" width="9" height="5"><path d="M0 0h8L4 4.500z" fill="#000"/></svg>
<!-- tree -->
<div class="a list" style="left:327px;top:300px;width:240px;height:246px;"></div>
<div class="a sbv" style="left:549px;top:301px;width:17px;height:244px;"></div>
<div class="a thumbv" style="left:550px;top:320px;width:15px;height:172px;"></div>
<svg style="left:553px;top:533px" width="9" height="5"><path d="M0 0h8L4 4.500z" fill="#444"/></svg>
<svg style="left:328px;top:428px" width="45" height="118" viewBox="0 0 45 118">
 <path d="M12.500 0v117M17 2.500h6M17 21.500h6M13 41.500h10M13 61.500h10M17 81.500h6M13 101.500h10" stroke="#808080" stroke-dasharray="1 1" fill="none"/>
 <g fill="#fff" stroke="#919191"><rect x="8.500" y="-1.500" width="8" height="8"/><rect x="8.500" y="17.500" width="8" height="8"/><rect x="8.500" y="77.500" width="8" height="8"/></g>
 <path d="M10.500 2.500h4M12.500 .5v4M10.500 21.500h4M12.500 19.500v4M10.500 81.500h4M12.500 79.500v4" stroke="#1e3287"/>
 <!-- rapid move -->
 <path d="M24 1.500h12M24 5.500h12" stroke="#d84b2e" stroke-width="1.600"/><rect x="34" y="-4" width="5" height="8" rx="2" fill="#d8a628"/>
 <!-- leads links -->
 <path d="M24.500 14v12q0 2 2 2h3M38.500 14v12q0 2-2 2h-3" stroke="#c8c832" stroke-width="2" fill="none"/>
 <path d="M24 14v10M39 14v10" stroke="#5fd8e8" stroke-width="1.500"/><path d="M25 13.500h13" stroke="#a03030"/>
 <rect x="29" y="14" width="5" height="11" rx="1.500" fill="#d8a628"/><path d="M28 29l3.500-4 3.500 4z" fill="#2fb42f"/>
 <!-- start point -->
 <circle cx="28" cy="46" r="4.500" fill="#fff" stroke="#000"/><path d="M28 41.500a4.500 4.500 0 0 1 4.500 4.500h-4.500zM28 50.500a4.500 4.500 0 0 1-4.500-4.500h4.500z" fill="#000"/>
 <rect x="32" y="35" width="7" height="3" fill="#b8b8b8"/><rect x="33" y="38" width="5" height="9" rx="1.500" fill="#d8a628"/>
 <!-- end point -->
 <circle cx="28" cy="66" r="4.500" fill="#fff" stroke="#000"/><path d="M28 61.500a4.500 4.500 0 0 1 4.500 4.500h-4.500zM28 70.500a4.500 4.500 0 0 1-4.500-4.500h4.500z" fill="#000"/>
 <rect x="32" y="55" width="7" height="3" fill="#b8b8b8"/><rect x="33" y="58" width="5" height="9" rx="1.500" fill="#d8a628"/>
 <!-- feeds speeds -->
 <path d="M25 88v-8h5v8h5v-8h4v8" stroke="#178a99" stroke-width="2.200" fill="none"/><path d="M26 78l4-4v3h5v2h-5v3z" fill="#2fb42f"/>
 <!-- history -->
 <path d="M28 95h10l-1 3-2 10H25l2-10z" fill="#f4e88a" stroke="#8a7a1a"/><path d="M28.500 99h6M28 102h6M27.500 105h6" stroke="#8a7a1a"/>
 <path d="M27 116.500h8" stroke="#a89a5a"/>
</svg>
<div class="t" style="left:372px;top:422px;">快进移动</div>
<div class="t" style="left:372px;top:441px;">切入切出和连接</div>
<div class="t" style="left:372px;top:461px;">开始点</div>
<div class="t" style="left:372px;top:481px;">结束点</div>
<div class="t" style="left:372px;top:501px;">进给和转速</div>
<div class="t" style="left:372px;top:521px;">历史</div>
<!-- thickness group -->
<div class="a grp" style="left:590px;top:446px;width:310px;height:41px;"></div>
<div class="t" style="left:595px;top:438px;background:#f0f0f0;padding:0 2px;">余量</div>
<div class="a btn" style="left:597px;top:456px;width:24px;height:24px;"></div>
<svg style="left:597px;top:456px" width="25" height="25" viewBox="0 0 25 25"><path d="M11.500 5.500h8v8l-2 3h-4l-2-3z" fill="#e8f4f6" stroke="#3a8a9a"/><path d="M13 18.500h5M14 20.500h3" stroke="#3a8a9a"/><path d="M4 13.500h7" stroke="#3a8a9a" stroke-dasharray="1 1"/></svg>
<div class="a inp" style="left:630px;top:458px;width:60px;height:18px;border-color:#d0d3da #ececf0 #ececf0 #d0d3da;"></div>
<div class="t" style="left:635px;top:459px;">0.01</div>
<div class="a btn" style="left:868px;top:455px;width:24px;height:24px;"></div>
<svg style="left:868px;top:455px" width="25" height="25" viewBox="0 0 25 25"><path d="M3 12v10h19v-10h-4q0 6-5.500 6T7 12z" fill="#5fc4d8"/><path d="M6 11q0 8 6.500 8T19 11" stroke="#e02828" stroke-width="1.600" fill="none"/><path d="M8.500 10q0 5.500 4 5.500t4-5.500" stroke="#f07878" stroke-width="1.300" fill="none"/><rect x="10.500" y="3" width="4" height="10" rx="2" fill="#c89a28" stroke="#6a4a08" stroke-width=".8"/></svg>
<!-- stepover group -->
<div class="a grp" style="left:590px;top:499px;width:310px;height:42px;"></div>
<div class="t" style="left:595px;top:491px;background:#f0f0f0;padding:0 2px;">行距 (距离)</div>
<div class="a btn" style="left:597px;top:508px;width:24px;height:24px;"></div>
<svg style="left:597px;top:508px" width="25" height="25" viewBox="0 0 25 25"><rect x="4.500" y="3.500" width="9" height="3" fill="#d8d8d8" stroke="#222"/><rect x="6.500" y="6.500" width="5" height="13" rx="1.500" fill="#c89a28" stroke="#3a2a08"/><path d="M13 18.500h5v-3l4 4-4 4v-3h-5z" fill="#2fb42f"/></svg>
<div class="a inp" style="left:630px;top:510px;width:60px;height:18px;border-color:#d0d3da #ececf0 #ececf0 #d0d3da;"></div>
<div class="t" style="left:635px;top:511px;">0.5</div>
<!-- preview + checkbox -->
<div class="a btn" style="left:662px;top:549px;width:73px;height:19px;line-height:17px;">预览</div>
<div class="a" style="left:745px;top:552px;width:13px;height:13px;border:1px solid #8e8f8f;background:linear-gradient(135deg,#dcdcdc,#fafafa);box-shadow:inset 0 0 0 1px #f4f4f4;"></div>
<div class="t" style="left:762px;top:550px;">显示</div>
<!-- bottom buttons -->
<div class="a btn" style="left:578px;top:679px;width:58px;height:19px;line-height:17px;">计算</div>
<div class="a btn" style="left:645px;top:679px;width:58px;height:19px;line-height:17px;">队列</div>
<div class="a btn" style="left:712px;top:679px;width:58px;height:19px;line-height:17px;">接受</div>
<div class="a btn" style="left:779px;top:679px;width:58px;height:19px;line-height:17px;">取消</div>


<!-- U-shape 3D illustration -->
<svg style="left:370px;top:550px" width="160" height="130" viewBox="0 0 1054 856">
 <defs>
  <filter id="bl2" x="-30%" y="-30%" width="160%" height="160%"><feGaussianBlur stdDeviation="26"/></filter>
  <radialGradient id="gsph" cx=".45" cy=".35" r=".7"><stop offset="0" stop-color="#ffffff"/><stop offset=".6" stop-color="#f0d0f8"/><stop offset="1" stop-color="#c890e8"/></radialGradient>
 </defs>
 <path d="M150 640C250 800 600 820 760 720L940 560L920 420L300 600Z" fill="#000" opacity=".25" filter="url(#bl2)"/>
 <!-- side wall -->
 <path d="M145 350C140 440 160 470 230 490C330 525 470 525 560 505C650 485 800 410 925 345L915 545C800 640 700 700 560 745C400 755 230 690 160 590Z" fill="#b48ae2" stroke="#000" stroke-width="4"/>
 <path d="M715 460L925 345L915 545L710 665Z" fill="#a078d4"/>
 <!-- stripes -->
 <g fill="none" stroke-linecap="round">
  <g stroke="#000" stroke-width="30">
   <path d="M150 395C150 450 180 480 235 498C330 535 470 535 560 515C650 495 800 425 922 362"/>
   <path d="M155 500C175 545 200 560 320 590C420 610 500 600 560 590C650 570 800 495 920 425"/>
   <path d="M160 560C180 610 230 635 320 650C420 670 500 665 560 650C650 630 800 555 918 485"/>
   <path d="M165 600C200 680 300 720 400 738C480 748 520 745 560 735C650 715 800 640 915 545"/>
  </g>
  <g stroke="#3fd83f" stroke-width="21">
   <path d="M150 395C150 450 180 480 235 498C330 535 470 535 560 515C650 495 800 425 922 362"/>
   <path d="M155 500C175 545 200 560 320 590C420 610 500 600 560 590C650 570 800 495 920 425"/>
   <path d="M160 560C180 610 230 635 320 650C420 670 500 665 560 650C650 630 800 555 918 485"/>
   <path d="M165 600C200 680 300 720 400 738C480 748 520 745 560 735C650 715 800 640 915 545"/>
  </g>
 </g>
 <!-- sphere bump -->
 <path d="M178 560C170 520 200 488 240 486C290 486 320 540 330 585C290 588 220 580 178 560Z" fill="url(#gsph)" stroke="#000" stroke-width="3"/>
 <path d="M150 395C150 450 180 480 235 498C330 535 470 535 560 515" fill="none" stroke="#000" stroke-width="30" stroke-linecap="round"/>
 <path d="M150 395C150 450 180 480 235 498C330 535 470 535 560 515" fill="none" stroke="#3fd83f" stroke-width="21" stroke-linecap="round"/>
 <!-- top face -->
 <path d="M462 112C350 150 220 210 165 290C130 350 150 430 235 478C330 518 470 518 560 498C650 478 800 405 925 345L925 327L870 318L840 335C760 380 690 420 600 442C500 455 400 440 350 400C300 360 290 300 330 250C370 200 430 170 500 145L496 118Z" fill="#a8b8f4" stroke="#000" stroke-width="4" stroke-linejoin="round"/>
 <!-- inner darker band -->
 <path d="M322 215C260 250 228 290 240 335C250 372 280 395 312 410L352 400C302 360 292 302 312 285Z" fill="#7688d2" stroke="#000" stroke-width="3"/>
 <!-- olive inner wall -->
 <path d="M305 345C330 385 400 408 480 412C560 412 650 385 740 340L838 298L840 335C760 380 690 420 600 442C500 455 400 440 350 400C325 385 310 372 305 345Z" fill="#8a8c1c" stroke="#1a1a00" stroke-width="3"/>
 <!-- red face -->
 <path d="M525 148L525 325L375 395C330 380 300 340 310 295C320 250 380 200 525 148Z" fill="#b90a0a" stroke="#500" stroke-width="3"/>
 <!-- end caps -->
 <path d="M448 118L470 105L498 122L496 150L470 140Z" fill="#a8b8f4" stroke="#000" stroke-width="3"/>
 <path d="M860 322L890 315L928 328L925 348L880 345Z" fill="#a8b8f4" stroke="#000" stroke-width="3"/>
 <!-- axis lines -->
 <g stroke="#141400" stroke-width="5" fill="none">
  <path d="M340 58L490 150"/><path d="M70 275L300 295"/><path d="M180 460L350 395"/><path d="M1005 397L830 320"/>
  <path d="M555 437V560" stroke-width="3"/><path d="M710 500V660" stroke-width="3"/><path d="M325 590V640" stroke-width="3"/><path d="M320 215V300" stroke-width="3"/>
 </g>
</svg>

<!-- ===== dialog 1 (strategy selector, active) ===== -->
<div class="a" style="left:8px;top:50px;width:747px;height:378px;background:#b5d1ea;border:1px solid #101820;border-radius:7px 7px 1px 1px;"></div>
<div class="a" style="left:9px;top:51px;width:745px;height:31px;border-radius:6px 6px 0 0;background:linear-gradient(#9bb6d5,#aac3df 55%,#b9cfe6);box-shadow:inset 1px 1px 0 #dce8f4;"></div>
<div class="a" style="left:746px;top:80px;width:8px;height:347px;background:linear-gradient(90deg,#b7d2eb,#aad4f0);"></div>
<div class="a dlgbody" style="left:16px;top:80px;width:731px;height:341px;"></div>
<div class="a" style="left:18px;top:60px;width:16px;height:16px;background:#fdefd8;"></div>
<div class="t" style="left:21px;top:58px;font-size:16px;font-weight:bold;color:#dd8a2c;line-height:18px;transform:scaleX(.88);transform-origin:0 0;text-shadow:0 1px 0 #b8681a;">P</div>
<div class="t" style="left:38px;top:60px;text-shadow:0 0 4px #fff,0 0 6px #fff;">策略选取器</div>
<div class="a" style="left:681px;top:60px;width:31px;height:17px;border:1px solid #4f6480;border-radius:3px;background:linear-gradient(#c3d5ea,#b4c9e2 48%,#93afd0 52%,#a9c2de);box-shadow:inset 0 0 0 1px rgba(255,255,255,.5);"></div>
<div class="a" style="left:714px;top:60px;width:31px;height:17px;border:1px solid #5a2a28;border-radius:3px;background:linear-gradient(#e8a894,#d9705a 48%,#c8402a 52%,#d4583c);box-shadow:inset 0 0 0 1px rgba(255,255,255,.35);"></div>
<div class="t" style="left:692px;top:61px;font-size:13px;font-weight:bold;color:#fff;-webkit-text-stroke:1.500px #3a4a64;paint-order:stroke fill;line-height:15px;">?</div>
<svg style="left:714px;top:60px" width="31" height="17" viewBox="0 0 31 17"><path d="M10.500 4.500h3l2 2.300 2-2.300h3l-3.500 4 3.500 4h-3l-2-2.400-2 2.400h-3l3.500-4z" fill="#fff" stroke="#6a3a34" stroke-width="1"/></svg>
<div class="a btn" style="left:24px;top:88px;width:24px;height:24px;border-radius:3px;"></div>
<div class="a btn" style="left:54px;top:88px;width:24px;height:24px;border-radius:3px;"></div>
<div class="a btn" style="left:84px;top:88px;width:24px;height:24px;border-radius:3px;border-color:#b4b4b4;background:linear-gradient(#f6f6f6,#ececec);"></div>
<svg style="left:24px;top:88px" width="24" height="24" viewBox="0 0 24 24"><defs><linearGradient id="fg" x1="0" y1="0" x2="0" y2="1"><stop offset="0" stop-color="#8fdcf4"/><stop offset="1" stop-color="#1e9cd4"/></linearGradient></defs><path d="M4.500 4.700L9 3.800l4 2.400 4 .8v3L7.500 11.500 5.200 19.500z" fill="#9fe0f4" stroke="#0c3a5c" stroke-width="1" stroke-linejoin="round"/><path d="M5.200 19.500L7.500 11.500Q14 9 21 8.700l-1.400 4.500Q17 16 15.500 16.800z" fill="url(#fg)" stroke="#0c3a5c" stroke-width="1" stroke-linejoin="round"/><path d="M11 2.500Q17 1.800 19 7l2-.5-2.500 4.500-4-2.500 2-.5Q15 5 11.500 4.500z" fill="#f4c828" stroke="#c89a10" stroke-width=".5"/></svg>
<svg style="left:54px;top:88px" width="24" height="24" viewBox="0 0 24 24"><path d="M5.600 11.400H17.400M11.500 5.200V17.600" stroke="#0a1830" stroke-width="5.400" stroke-linecap="round"/><path d="M5.600 11.400H17.400M11.500 5.200V17.600" stroke="#a4e0f6" stroke-width="2.800" stroke-linecap="round"/></svg>
<svg style="left:84px;top:88px" width="24" height="24" viewBox="0 0 24 24"><path d="M5.500 5Q11 10 17.500 18.500M17.500 5Q13 10 5 17.500" stroke="#c6c6c6" stroke-width="5.500" stroke-linecap="round" fill="none"/><path d="M5.500 5Q11 10 17.500 18.500M17.500 5Q13 10 5 17.500" stroke="#e8e8e8" stroke-width="3" stroke-linecap="round" fill="none"/></svg>
<div class="a list" style="left:24px;top:117px;width:224px;height:261px;"></div>
<div class="a" style="left:55px;top:219px;width:171px;height:25px;background:#f0f0f0;border-radius:3px;"></div>
<div class="li" style="left:62px;top:123px;">常用</div>
<div class="li" style="left:62px;top:148px;">3D区域清除</div>
<div class="li" style="left:62px;top:173px;">曲线加工</div>
<div class="li" style="left:62px;top:198px;">特征加工</div>
<div class="li" style="left:62px;top:223px;">精加工</div>
<div class="li" style="left:62px;top:248px;">钻孔</div>
<div class="li" style="left:62px;top:273px;">钻孔方法</div>
<div class="li" style="left:62px;top:298px;">管道加工</div>
<div class="li" style="left:62px;top:323px;">叶盘</div>
<div class="li" style="left:62px;top:348px;">筋</div>
<div class="a sbv" style="left:230px;top:118px;width:17px;height:259px;"></div>
<div class="a thumbv" style="left:231px;top:136px;width:15px;height:185px;"></div>
<svg style="left:234px;top:125px" width="9" height="5"><path d="M0 4.500h8L4 0z" fill="#444"/></svg>
<svg style="left:234px;top:365px" width="9" height="5"><path d="M0 0h8L4 4.500z" fill="#444"/></svg>
<svg style="left:235px;top:225px" width="8" height="8"><path d="M0 .5h7M0 2.500h7M0 4.500h7M0 6.500h7" stroke="#555"/></svg>
<svg style="left:261px;top:93px" width="18" height="18" viewBox="0 0 18 18"><circle cx="7" cy="7.500" r="5" fill="#fff" stroke="#222" stroke-width="1.300"/><path d="M10.500 11.500l4.500 4.500" stroke="#222" stroke-width="2.200" stroke-linecap="round"/></svg>
<div class="a inp" style="left:283px;top:88px;width:222px;height:22px;border-color:#abadb3 #e3e9ef #e3e9ef #e2e3ea;"></div>
<div class="a list" style="left:256px;top:117px;width:248px;height:261px;"></div>
<div class="a" style="left:298px;top:266px;width:188px;height:21px;background:#3399ff;"></div>
<div class="li" style="left:304px;top:121px;">曲面投影精加工</div>
<div class="li" style="left:304px;top:142px;">放射精加工</div>
<div class="li" style="left:304px;top:163px;">平行精加工</div>
<div class="li" style="left:304px;top:184px;">平行平坦面精加工</div>
<div class="li" style="left:304px;top:205px;">旋转精加工</div>
<div class="li" style="left:304px;top:226px;">螺旋精加工</div>
<div class="li" style="left:304px;top:247px;">陡峭和浅滩精加工</div>
<div class="li" style="left:304px;top:268px;color:#fff;">曲面精加工</div>
<div class="li" style="left:304px;top:289px;"><span style="letter-spacing:-.5px">SWARF</span>精加工</div>
<div class="li" style="left:304px;top:310px;">线框轮廓加工</div>
<div class="li" style="left:304px;top:331px;">线框<span style="letter-spacing:-.5px">SWARF</span>精加工</div>
<div class="a sbv" style="left:486px;top:118px;width:17px;height:242px;"></div>
<div class="a thumbv" style="left:487px;top:265px;width:15px;height:76px;"></div>
<svg style="left:490px;top:125px" width="9" height="5"><path d="M0 4.500h8L4 0z" fill="#444"/></svg>
<svg style="left:490px;top:348px" width="9" height="5"><path d="M0 0h8L4 4.500z" fill="#444"/></svg>
<svg style="left:491px;top:298px" width="8" height="8"><path d="M0 .5h7M0 2.500h7M0 4.500h7M0 6.500h7" stroke="#555"/></svg>
<div class="a" style="left:257px;top:359px;width:246px;height:18px;background:linear-gradient(#e3e3e3,#f0f0f0 40%,#fafafa);"></div>
<div class="a" style="left:486px;top:360px;width:17px;height:17px;background:#f0f0f0;"></div>
<div class="a thumbh" style="left:276px;top:360px;width:174px;height:15px;"></div>
<svg style="left:263px;top:364px" width="5" height="9"><path d="M4.500 0v8L0 4z" fill="#444"/></svg>
<svg style="left:474px;top:364px" width="5" height="9"><path d="M0 0v8L4.500 4z" fill="#444"/></svg>
<svg style="left:359px;top:365px" width="8" height="8"><path d="M.5 0v7M2.500 0v7M4.500 0v7M6.500 0v7" stroke="#555"/></svg>
<div class="a grp" style="left:511px;top:120px;width:227px;height:259px;border-color:#e4e4e4;box-shadow:1px 1px 0 #fbfbfb,inset 1px 1px 0 #fbfbfb;"></div>
<div class="t" style="left:517px;top:111px;background:#f0f0f0;padding:0 3px;">预览</div>
<div class="a btn" style="left:278px;top:392px;width:87px;height:21px;line-height:19px;">接受</div>
<div class="a btn" style="left:374px;top:392px;width:87px;height:21px;line-height:19px;">取消</div>
<svg style="left:734px;top:407px" width="12" height="12"><path d="M9 2h2v2h-2zM9 6h2v2h-2zM9 10h2v2h-2zM5 6h2v2h-2zM5 10h2v2h-2zM1 10h2v2h-2z" fill="#c0c0c0"/></svg>

<!-- preview 3D block -->
<svg style="left:535px;top:180px" width="180" height="140" viewBox="0 0 1101 856">
 <defs>
  <filter id="bl1" x="-30%" y="-30%" width="160%" height="160%"><feGaussianBlur stdDeviation="28"/></filter>
  <linearGradient id="gtop" x1="0" y1="1" x2="1" y2="0"><stop offset="0" stop-color="#8898ee"/><stop offset="1" stop-color="#98aefc"/></linearGradient>
  <linearGradient id="grt" x1="0" y1="0" x2="1" y2="1"><stop offset="0" stop-color="#6272c8"/><stop offset="1" stop-color="#4c5cae"/></linearGradient>
  <linearGradient id="gcyl" x1="280" y1="280" x2="480" y2="620" gradientUnits="userSpaceOnUse"><stop offset="0" stop-color="#a95ce0"/><stop offset=".3" stop-color="#e9b4f4"/><stop offset=".55" stop-color="#fdeafd"/><stop offset=".8" stop-color="#e9a8f4"/><stop offset="1" stop-color="#b86ae6"/></linearGradient>
  <clipPath id="ccyl"><path d="M130 358L430 205C440 300 490 390 560 440L400 525L405 548C400 600 375 640 340 638C270 625 170 520 130 358Z"/></clipPath>
 </defs>
 <path d="M120 560L480 820L1040 450L1030 300L500 600Z" fill="#000" opacity=".22" filter="url(#bl1)"/>
 <path d="M75 325L635 48L1022 235L468 565Z" fill="url(#gtop)" stroke="#0c1440" stroke-width="5" stroke-linejoin="round"/>
 <path d="M468 565L1022 235L1010 420L468 785Z" fill="url(#grt)" stroke="#0c1440" stroke-width="5" stroke-linejoin="round"/>
 <path d="M75 325L468 565L468 785L95 520Z" fill="#5c6cc2" stroke="#0c1440" stroke-width="5" stroke-linejoin="round"/>
 <path d="M430 205L705 355L560 440C490 390 440 300 430 205Z" fill="#4d5eb0" stroke="#0c1440" stroke-width="4" stroke-linejoin="round"/>
 <path d="M130 358L430 205C440 300 490 390 560 440L400 525L405 548C400 600 375 640 340 638C270 625 170 520 130 358Z" fill="url(#gcyl)"/>
 <g clip-path="url(#ccyl)" stroke="#3cc43c" stroke-width="19" fill="none" stroke-linecap="butt">
  <path d="M125 361L435 203" stroke-width="10"/>
  <path d="M150 450L450 298"/>
  <path d="M210 535L495 385"/>
  <path d="M272 612L565 445"/>
  <path d="M335 640L410 598" stroke-width="14"/>
 </g>
 <path d="M130 358L430 205C440 300 490 390 560 440L400 525L405 548C400 600 375 640 340 638C270 625 170 520 130 358Z" fill="none" stroke="#0c1440" stroke-width="4" stroke-linejoin="round"/>
</svg>

<svg style="left:31px;top:120px" width="22" height="22" viewBox="0 0 23 23"><path d="M11.500 1l3.200 6.700 7.300 1-5.300 5.100 1.300 7.300-6.500-3.500-6.500 3.500 1.300-7.300L.5 8.700l7.300-1z" fill="#fbd21e" stroke="#f0a818" stroke-width="1"/><path d="M11.500 4l2.300 5 5 .6-3.800 3.500" fill="none" stroke="#fff08a" stroke-width="1"/></svg>
<svg style="left:31px;top:145px" width="22" height="22" viewBox="0 0 23 23"><defs><linearGradient id="stg" x1="0" y1="0" x2="1" y2="0"><stop offset="0" stop-color="#d8d8d8"/><stop offset="1" stop-color="#a4a4a4"/></linearGradient></defs><path d="M1.300 21.500V16.200H8.500V9.700H15V3.200H21.500V21.500z" fill="url(#stg)" stroke="#b4b4b4" stroke-width=".6"/><path d="M8.500 16.200V21.500M15 9.700V21.500" stroke="#e6e6e6" stroke-width=".8"/><rect x="1.300" y="14.200" width="7.200" height="2.600" rx="1.300" fill="#3fc850"/><rect x="8.500" y="7.700" width="6.500" height="2.600" rx="1.300" fill="#3fc850"/><rect x="15" y="1.200" width="6.500" height="2.600" rx="1.300" fill="#3fc850"/></svg>
<svg style="left:31px;top:170px" width="22" height="22" viewBox="0 0 23 23"><path d="M11.500 1.500q2.500 2.200 2.500 4.500 3-1.200 5.500 0-.3 3-2.700 5 2.400 2 2.700 5-2.500 1.200-5.500 0 0 2.300-2.500 4.500Q9 18.300 9 16q-3 1.200-5.500 0 .3-3 2.700-5Q3.800 9 3.500 6 6 4.800 9 6q0-2.300 2.500-4.500z" fill="#fff" stroke="#1e961e" stroke-width="2.500" stroke-linejoin="round"/></svg>
<svg style="left:31px;top:195px" width="22" height="22" viewBox="0 0 23 23"><rect x="1" y="1" width="21" height="21" rx="2" fill="#5cc05c" stroke="#8ad08a"/><rect x="4.500" y="4.500" width="14" height="14" fill="none" stroke="#3fa83f"/><rect x="7.500" y="7.500" width="8" height="8" fill="none" stroke="#7fd47f"/><rect x="10" y="10" width="3" height="3" fill="#3fa83f"/></svg>
<svg style="left:31px;top:220px" width="22" height="22" viewBox="0 0 23 23"><path d="M1 21v-4q4-1 5-5 4 0 5-5 5 0 6-4l3-1v19z" fill="#c8c8c8" stroke="#a0a0a0" stroke-width=".8"/><path d="M1 19q4-1 5.500-5.500 4-.5 5-5Q16 8 17.500 3.500l2.500-1" fill="none" stroke="#f08a1e" stroke-width="2.200" stroke-linecap="round"/></svg>
<svg style="left:31px;top:245px" width="22" height="22" viewBox="0 0 23 23"><path d="M5.500 5v15.500h11V5" fill="#e4f4f8" stroke="#2a8aa0" stroke-width="1.200"/><path d="M9 1h4v15l-2 4-2-4z" fill="#c0c8d0" stroke="#6a7480" stroke-width=".8"/><path d="M9 4l4 2M9 7l4 2M9 10l4 2M9 13l4 2" stroke="#6a7480" stroke-width=".8"/></svg>
<svg style="left:31px;top:270px" width="22" height="22" viewBox="0 0 23 23"><rect x="1.500" y="2.500" width="19" height="19" fill="#eaf6f8" stroke="#3a8a9a"/><path d="M2 2.500h18" stroke="#222" stroke-width="2" stroke-dasharray="1.500 1"/><path d="M5 5h3.500v10L7 19l-2-4z" fill="#b8c0c8" stroke="#6a7480" stroke-width=".7"/><path d="M11 7.500h7M11 10.500h7M11 13.500h7M11 16.500h7" stroke="#222" stroke-width="1.400"/></svg>
<svg style="left:31px;top:295px" width="22" height="22" viewBox="0 0 23 23"><path d="M3.300 18.300Q17.800 17 19.500 4.100" fill="none" stroke="#5a6a5a" stroke-width="7.600"/><path d="M3.300 18.300Q17.800 17 19.500 4.100" fill="none" stroke="#b4b4b4" stroke-width="6.400"/><path d="M3.300 18.300Q17.800 17 19.500 4.100" fill="none" stroke="#6fe07a" stroke-width="4"/><path d="M3.300 17.600Q17 16.300 18.800 4.100" fill="none" stroke="#c0f8c8" stroke-width="1.200"/><ellipse cx="3.300" cy="18.300" rx="1.700" ry="3.800" fill="#a83ca8" stroke="#501a50" stroke-width=".6"/><ellipse cx="19.500" cy="4.100" rx="3.800" ry="1.600" fill="#a83ca8" stroke="#501a50" stroke-width=".6"/></svg>
<svg style="left:31px;top:320px" width="22" height="22" viewBox="0 0 23 23"><path d="M11.500 11.500L22.5 11.5L21.5 14.8Z" fill="#8a8a8a" stroke="#5a5a5a" stroke-width=".5"/><path d="M11.500 11.500L21.2 16.6L18.8 19.1Z" fill="#8a8a8a" stroke="#5a5a5a" stroke-width=".5"/><path d="M11.500 11.500L17.7 20.6L14.4 21.6Z" fill="#8a8a8a" stroke="#5a5a5a" stroke-width=".5"/><path d="M11.500 11.500L12.8 22.4L9.4 21.8Z" fill="#8a8a8a" stroke="#5a5a5a" stroke-width=".5"/><path d="M11.500 11.500L7.6 21.8L4.9 19.6Z" fill="#8a8a8a" stroke="#5a5a5a" stroke-width=".5"/><path d="M11.500 11.500L3.3 18.8L1.8 15.6Z" fill="#8a8a8a" stroke="#5a5a5a" stroke-width=".5"/><path d="M11.500 11.500L0.8 14.1L1.0 10.7Z" fill="#8a8a8a" stroke="#5a5a5a" stroke-width=".5"/><path d="M11.500 11.500L0.8 8.9L2.6 5.9Z" fill="#8a8a8a" stroke="#5a5a5a" stroke-width=".5"/><path d="M11.500 11.500L3.3 4.2L6.2 2.4Z" fill="#8a8a8a" stroke="#5a5a5a" stroke-width=".5"/><path d="M11.500 11.500L7.6 1.2L11.1 1.0Z" fill="#8a8a8a" stroke="#5a5a5a" stroke-width=".5"/><path d="M11.500 11.500L12.8 0.6L16.0 2.0Z" fill="#8a8a8a" stroke="#5a5a5a" stroke-width=".5"/><path d="M11.500 11.500L17.7 2.4L19.9 5.2Z" fill="#8a8a8a" stroke="#5a5a5a" stroke-width=".5"/><path d="M11.500 11.500L21.2 6.4L21.9 9.8Z" fill="#8a8a8a" stroke="#5a5a5a" stroke-width=".5"/><circle cx="11.500" cy="11.500" r="5" fill="#a8a8a8" stroke="#6a6a6a" stroke-width=".6"/><circle cx="11.500" cy="11.500" r="2.200" fill="#f4f4f4"/></svg>
<svg style="left:31px;top:345px" width="22" height="22" viewBox="0 0 23 23"><path d="M1 3h21v18H1z" fill="#c6c6c6" stroke="#a8a8a8" stroke-width=".8"/><path d="M8 3h7l-1.500 14q-2 1.500-4 0z" fill="#f4f4f4"/><path d="M9.500 0h4l-.8 15q-1.200 1-2.400 0z" fill="#ecd870" stroke="#6a5208" stroke-width=".9"/></svg>
<svg style="left:44px;top:371px" width="7" height="6" viewBox="0 0 10 7"><path d="M1 7V4l3-3h4v6z" fill="#e8b02a" stroke="#8a5a08"/></svg>
<svg style="left:263.500px;top:123px" width="12.500" height="12.500" viewBox="0 0 13 13"><path d="M6.500 .8l1.800 3.800 4.100.6-3 2.900.7 4.100-3.600-1.900-3.600 1.900.7-4.100-3-2.900 4.100-.6z" fill="#fffdf8" stroke="#eeb070" stroke-width="1"/></svg>
<svg style="left:263.500px;top:144px" width="12.500" height="12.500" viewBox="0 0 13 13"><path d="M6.500 .8l1.800 3.800 4.100.6-3 2.900.7 4.100-3.600-1.900-3.600 1.900.7-4.100-3-2.900 4.100-.6z" fill="#fffdf8" stroke="#eeb070" stroke-width="1"/></svg>
<svg style="left:263.500px;top:165px" width="12.500" height="12.500" viewBox="0 0 13 13"><path d="M6.500 .8l1.800 3.800 4.100.6-3 2.900.7 4.100-3.600-1.900-3.600 1.900.7-4.100-3-2.900 4.100-.6z" fill="#fbd01e" stroke="#e89a18" stroke-width="1"/></svg>
<svg style="left:263.500px;top:186px" width="12.500" height="12.500" viewBox="0 0 13 13"><path d="M6.500 .8l1.800 3.800 4.100.6-3 2.900.7 4.100-3.600-1.900-3.600 1.900.7-4.100-3-2.900 4.100-.6z" fill="#fffdf8" stroke="#eeb070" stroke-width="1"/></svg>
<svg style="left:263.500px;top:207px" width="12.500" height="12.500" viewBox="0 0 13 13"><path d="M6.500 .8l1.800 3.800 4.100.6-3 2.900.7 4.100-3.600-1.900-3.600 1.900.7-4.100-3-2.900 4.100-.6z" fill="#fffdf8" stroke="#eeb070" stroke-width="1"/></svg>
<svg style="left:263.500px;top:228px" width="12.500" height="12.500" viewBox="0 0 13 13"><path d="M6.500 .8l1.800 3.800 4.100.6-3 2.900.7 4.100-3.600-1.900-3.600 1.900.7-4.100-3-2.900 4.100-.6z" fill="#fffdf8" stroke="#eeb070" stroke-width="1"/></svg>
<svg style="left:263.500px;top:249px" width="12.500" height="12.500" viewBox="0 0 13 13"><path d="M6.500 .8l1.800 3.800 4.100.6-3 2.900.7 4.100-3.600-1.900-3.600 1.900.7-4.100-3-2.900 4.100-.6z" fill="#fffdf8" stroke="#eeb070" stroke-width="1"/></svg>
<svg style="left:263.500px;top:270px" width="12.500" height="12.500" viewBox="0 0 13 13"><path d="M6.500 .8l1.800 3.800 4.100.6-3 2.900.7 4.100-3.600-1.900-3.600 1.900.7-4.100-3-2.900 4.100-.6z" fill="#fffdf8" stroke="#eeb070" stroke-width="1"/></svg>
<svg style="left:263.500px;top:291px" width="12.500" height="12.500" viewBox="0 0 13 13"><path d="M6.500 .8l1.800 3.800 4.100.6-3 2.900.7 4.100-3.600-1.900-3.600 1.900.7-4.100-3-2.900 4.100-.6z" fill="#fffdf8" stroke="#eeb070" stroke-width="1"/></svg>
<svg style="left:263.500px;top:312px" width="12.500" height="12.500" viewBox="0 0 13 13"><path d="M6.500 .8l1.800 3.800 4.100.6-3 2.900.7 4.100-3.600-1.900-3.600 1.900.7-4.100-3-2.900 4.100-.6z" fill="#fffdf8" stroke="#eeb070" stroke-width="1"/></svg>
<svg style="left:263.500px;top:333px" width="12.500" height="12.500" viewBox="0 0 13 13"><path d="M6.500 .8l1.800 3.800 4.100.6-3 2.900.7 4.100-3.600-1.900-3.600 1.900.7-4.100-3-2.900 4.100-.6z" fill="#fffdf8" stroke="#eeb070" stroke-width="1"/></svg>
<svg style="left:278px;top:121px" width="16" height="16" viewBox="0 0 17 17"><path d="M1 3q2-2.500 5-1l5 1q1 2-1 3L5 5Q3 6.500 1 3z" fill="#f0dc8a" stroke="#8a7a2a" stroke-width=".7"/><path d="M5 9q2 4 7 2l3-4q1 5-3 7.500-5 1.500-7-2z" fill="#2ab0c0" stroke="#0a4a5c" stroke-width=".8"/><path d="M8 5l1 5M11 5l-.5 5" stroke="#3fc83f" stroke-width="1"/></svg>
<svg style="left:278px;top:142px" width="16" height="16" viewBox="0 0 17 17"><rect x=".5" y=".5" width="16" height="16" fill="#38c8b0" stroke="#0a5a3a"/><path d="M8.500 1v15M1 8.500h15M2.500 2.500l12 12M14.500 2.500l-12 12" stroke="#2fe02f" stroke-width="1.500"/><path d="M8.500 1v15M1 8.500h15" stroke="#0a7a2a" stroke-width=".5"/></svg>
<svg style="left:278px;top:163px" width="16" height="16" viewBox="0 0 17 17"><rect x=".5" y=".5" width="16" height="16" fill="#2fb85a" stroke="#0a5a2a"/><path d="M2 4h13M2 8.500h13M2 13h13" stroke="#7ff09a" stroke-width="2"/><path d="M2 6.200h13M2 10.700h13" stroke="#0a7a2a" stroke-width=".8"/></svg>
<svg style="left:278px;top:184px" width="16" height="16" viewBox="0 0 17 17"><path d="M1 10l6-7h9l-5 7z" fill="#3fd05a" stroke="#0a5a2a" stroke-width=".8"/><path d="M3.500 8l4-5M7 8.500l4.500-5.500M10 9l4.500-5.500" stroke="#c8f8d0" stroke-width="1"/><path d="M1 10h10v6H1z" fill="#9fe4ee" stroke="#0a5a6a" stroke-width=".8"/><path d="M11 10l5-7v6l-5 7z" fill="#2aa8ba" stroke="#0a5a6a" stroke-width=".8"/></svg>
<svg style="left:278px;top:205px" width="16" height="16" viewBox="0 0 17 17"><ellipse cx="9" cy="10.500" rx="6.500" ry="5" fill="#2ab0c8" stroke="#0a4a6a" stroke-width=".8" transform="rotate(-35 9 10.500)"/><ellipse cx="11" cy="9" rx="3.200" ry="4.500" fill="#8ae0f0" stroke="#0a4a6a" stroke-width=".6" transform="rotate(-35 11 9)"/><path d="M2 9Q1 3 7 2l-.5-1.500L11 2.500 7.500 5.500 7 4Q3.500 4.500 4 9z" fill="#3fc83f" stroke="#0a6a0a" stroke-width=".6"/></svg>
<svg style="left:278px;top:226px" width="16" height="16" viewBox="0 0 17 17"><rect x=".5" y=".5" width="16" height="16" fill="#2fb88a" stroke="#0a5a3a"/><path d="M8.500 8.500q1-1.500 2.500 0t-1 3.500-5-1 0-6.500 7.500-.5 1.500 8" fill="none" stroke="#8af0a0" stroke-width="1.300"/></svg>
<svg style="left:278px;top:247px" width="16" height="16" viewBox="0 0 17 17"><path d="M1 12q0-5 7.500-7T16 12v2q-7.500 3.500-15 0z" fill="#2fc05a" stroke="#0a5a2a" stroke-width=".8"/><path d="M2 11q6 3 13 0M3 13.500q5.500 2 11 0" stroke="#9af0aa" stroke-width="1" fill="none"/><path d="M5 5q1-4 4.500-4t4 3.500L11 8 7 7.500z" fill="#1a1a1a"/><path d="M8 3.500q1.500-1.500 3 0" stroke="#3fc83f" stroke-width="1.200" fill="none"/></svg>
<svg style="left:278px;top:268px" width="16" height="16" viewBox="0 0 17 17"><path d="M3.500 11.500l3.500 4q6.500-1.500 9-10L13 3.500q-.8 5.500-5 7z" fill="#4ab4e4" stroke="#0a3a6a" stroke-width=".7" stroke-linejoin="round"/><path d="M5.500 12.500q5-1 7.500-7" stroke="#a8e0f8" stroke-width="1.200" fill="none"/><path d="M5.500 0h4v10.500q-2 1.800-4 0z" fill="#f0e4a0" stroke="#8a7a28" stroke-width=".7"/><path d="M7 1v9" stroke="#fffbe0" stroke-width="1"/></svg>
<svg style="left:278px;top:289px" width="16" height="16" viewBox="0 0 17 17"><path d="M5 1h6l4.500 14H.8z" fill="#38c0c8" stroke="#0a3a4a" stroke-width="1"/><path d="M5.500 2L3 14h5l1-12z" fill="#a8eef2"/><path d="M10 0l3-.3 2.500 13.500-3 .8z" fill="#f0d88a" stroke="#5a4a08" stroke-width=".8"/></svg>
<svg style="left:278px;top:310px" width="16" height="16" viewBox="0 0 17 17"><ellipse cx="8" cy="13" rx="7" ry="3" fill="none" stroke="#222" stroke-width="1"/><path d="M6.500 0h4v12.500q-2 1.200-4 0z" fill="#f0d88a" stroke="#7a6a18" stroke-width=".8"/><path d="M8 1v11" stroke="#fff6c8" stroke-width="1"/></svg>
<svg style="left:278px;top:331px" width="16" height="16" viewBox="0 0 17 17"><path d="M5 2.500q4-2 7 0l-1 4q-7 2-9 6 0 3 6 3h7" fill="none" stroke="#222" stroke-width="1.100"/><path d="M9.500 1l3.500-.5 2 14-3.500.8z" fill="#f0d88a" stroke="#5a4a08" stroke-width=".8"/></svg>
<div class="a" style="left:367px;top:264px;width:39px;height:40px;border-radius:50%;background:rgba(230,70,100,.5);"></div>
<svg style="left:385px;top:283px" width="14" height="21" viewBox="0 0 14 21"><path d="M1 1v16l4-3.500 2.800 6.500 2.500-1.100-2.800-6.300h5.300z" fill="#fff" stroke="#000" stroke-width="1" stroke-linejoin="round"/></svg>
</body>
</html>
